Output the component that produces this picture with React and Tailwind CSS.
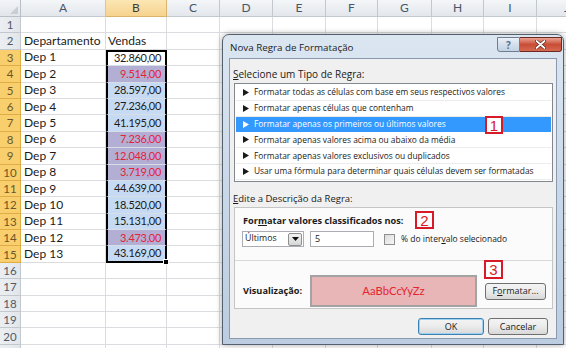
import React from 'react';

const COLS = [
  { key: 'A', cls: 'w-[85px]' },
  { key: 'B', cls: 'w-[61px]' },
  { key: 'C', cls: 'w-[53px]' },
  { key: 'D', cls: 'w-[53px]' },
  { key: 'E', cls: 'w-[53px]' },
  { key: 'F', cls: 'w-[52px]' },
  { key: 'G', cls: 'w-[54px]' },
  { key: 'H', cls: 'w-[52px]' },
  { key: 'I', cls: 'w-[53px]' },
  { key: 'J', cls: 'w-[60px]' },
];

// fill: white | sel (selected, no rule) | low (matched by the rule)
const ROWS = [
  { n: 1 },
  { n: 2, a: 'Departamento', b: 'Vendas', title: true },
  { n: 3, a: 'Dep 1', b: '32.860,00', fill: 'white' },
  { n: 4, a: 'Dep 2', b: '9.514,00', fill: 'low' },
  { n: 5, a: 'Dep 3', b: '28.597,00', fill: 'sel' },
  { n: 6, a: 'Dep 4', b: '27.236,00', fill: 'sel' },
  { n: 7, a: 'Dep 5', b: '41.195,00', fill: 'sel' },
  { n: 8, a: 'Dep 6', b: '7.236,00', fill: 'low' },
  { n: 9, a: 'Dep 7', b: '12.048,00', fill: 'low' },
  { n: 10, a: 'Dep 8', b: '3.719,00', fill: 'low' },
  { n: 11, a: 'Dep 9', b: '44.639,00', fill: 'sel' },
  { n: 12, a: 'Dep 10', b: '18.520,00', fill: 'sel' },
  { n: 13, a: 'Dep 11', b: '15.131,00', fill: 'sel' },
  { n: 14, a: 'Dep 12', b: '3.473,00', fill: 'low' },
  { n: 15, a: 'Dep 13', b: '43.169,00', fill: 'sel' },
  { n: 16 }, { n: 17 }, { n: 18 }, { n: 19 }, { n: 20 }, { n: 21 },
];

const FILL = {
  white: 'bg-white text-[#1b1b1b]',
  sel: 'bg-[#c6dbf3] text-[#1b1b1b]',
  low: 'bg-[#b3afd4] text-[#e2243a]',
};

const RULES = [
  'Formatar todas as células com base em seus respectivos valores',
  'Formatar apenas células que contenham',
  'Formatar apenas os primeiros ou últimos valores',
  'Formatar apenas valores acima ou abaixo da média',
  'Formatar apenas valores exclusivos ou duplicados',
  'Usar uma fórmula para determinar quais células devem ser formatadas',
];

function Badge({ children, className }) {
  return (
    <div
      className={
        'absolute flex items-center justify-center border-2 border-[#d71a28] bg-white text-[15px] leading-none text-[#d71a28] font-["Liberation_Sans",sans-serif] ' +
        className
      }
    >
      {children}
    </div>
  );
}

function Arrow({ color = '#1a1a1a' }) {
  return (
    <svg width="6" height="7" viewBox="0 0 6 7" className="shrink-0">
      <polygon points="0,0 6,3.5 0,7" fill={color} />
    </svg>
  );
}

function WinButton({ children, primary, className }) {
  return (
    <div
      className={
        'flex h-[17px] items-center justify-center rounded-[3px] border bg-gradient-to-b from-[#f4f4f4] via-[#ebebeb] to-[#d8d8d8] text-[9px] text-[#1a1a1a] ' +
        (primary ? 'border-[#3c7fb1] shadow-[inset_0_0_0_1px_#9fd2f2] ' : 'border-[#707070] ') +
        className
      }
    >
      {children}
    </div>
  );
}

function Sheet() {
  return (
    <div className="flex flex-col font-['Lato',sans-serif] text-[12px] text-[#1b1b1b]">
      <div className="flex h-[17px] shrink-0">
        <div className="relative w-[21px] shrink-0 border-r border-b border-[#b9bfc7] bg-gradient-to-b from-[#f2f4f7] to-[#e2e6eb]">
          <svg width="8" height="8" viewBox="0 0 8 8" className="absolute right-[2px] bottom-[2px]">
            <polygon points="8,0 8,8 0,8" fill="#c9ced5" />
          </svg>
        </div>
        {COLS.map(c => (
          <div
            key={c.key}
            className={
              c.cls +
              ' flex shrink-0 items-center justify-center border-r border-b text-[12px] ' +
              (c.key === 'B'
                ? 'border-[#d9b46a] bg-gradient-to-b from-[#fbe6b2] to-[#f6d38f] text-[#3c3c3c]'
                : 'border-[#c3c8cf] bg-gradient-to-b from-[#f4f6f8] to-[#e3e7ec] text-[#4a5566]')
            }
          >
            {c.key}
          </div>
        ))}
      </div>
      {ROWS.map(r => {
        const active = r.n >= 3 && r.n <= 15;
        return (
          <div key={r.n} className="flex h-[16.4px] shrink-0">
            <div
              className={
                'flex w-[21px] shrink-0 items-center justify-center border-r border-b text-[11.5px] ' +
                (active
                  ? 'border-[#e0ac45] bg-[#f8cf6c] text-[#6a5629]'
                  : 'border-[#c3c8cf] bg-gradient-to-r from-[#eceff2] to-[#e2e6ea] text-[#4f5a69]')
              }
            >
              {r.n}
            </div>
            {COLS.map(c => {
              if (c.key === 'A') {
                return (
                  <div key="A" className={c.cls + ' flex shrink-0 items-center overflow-visible whitespace-nowrap border-r border-b border-[#dadcdf] pl-[3px]'}>
                    {r.a}
                  </div>
                );
              }
              if (c.key === 'B') {
                if (active) {
                  return (
                    <div
                      key="B"
                      className={
                        c.cls +
                        ' relative flex shrink-0 items-center justify-end whitespace-nowrap border-x-2 border-b border-x-black border-b-[#d8dee6] pr-[4px] text-[11px] tracking-[-0.3px] ' +
                        FILL[r.fill] +
                        (r.n === 3 ? ' border-t-2 border-t-black' : '') +
                        (r.n === 15 ? ' border-b-2 border-b-black' : '')
                      }
                    >
                      {r.b}
                      {r.n === 15 && (
                        <div className="absolute right-[-4px] bottom-[-4px] h-[6px] w-[6px] border border-white bg-black" />
                      )}
                    </div>
                  );
                }
                return (
                  <div key="B" className={c.cls + ' flex shrink-0 items-center whitespace-nowrap border-r border-b border-[#dadcdf] pl-[2px]'}>
                    {r.b}
                  </div>
                );
              }
              return <div key={c.key} className={c.cls + ' shrink-0 border-r border-b border-[#dadcdf]'} />;
            })}
          </div>
        );
      })}
    </div>
  );
}

function Dialog() {
  return (
    <div className="absolute left-[222px] top-[34px] flex h-[311px] w-[342px] flex-col rounded-t-[7px] border border-[#55606e] bg-gradient-to-b from-[#dbe6f1] via-[#c9d8e9] to-[#bccde1] shadow-[0_0_6px_rgba(0,0,0,0.35)] font-['Open_Sans',sans-serif] text-[#1a1a1a]">
      {/* title bar */}
      <div className="flex h-[23px] shrink-0 items-start">
        <div className="pl-[7px] pt-[7px] text-[9.8px] leading-[12px] text-[#1d1d1d]">Nova Regra de Formatação</div>
        <div className="ml-auto mr-[1px] mt-[2px] flex h-[15px]">
          <div className="flex w-[23px] items-center justify-center rounded-bl-[3px] border border-[#6f7d8e] bg-gradient-to-b from-[#e9f0f7] via-[#d3dfec] to-[#c2d2e4] text-[10px] font-bold leading-none text-[#5b6f88]">
            ?
          </div>
          <div className="flex w-[42px] items-center justify-center rounded-br-[3px] border border-l-0 border-[#6b2a22] bg-gradient-to-b from-[#e8a292] via-[#c94c36] to-[#d66a52]">
            <svg width="11" height="9" viewBox="0 0 11 9">
              <path d="M1.5 1 L9.5 8 M9.5 1 L1.5 8" stroke="#4a1a12" strokeWidth="3" strokeLinecap="round" />
              <path d="M1.5 1 L9.5 8 M9.5 1 L1.5 8" stroke="#ffffff" strokeWidth="1.8" strokeLinecap="round" />
            </svg>
          </div>
        </div>
      </div>

      {/* client area */}
      <div className="relative mx-[6px] mb-[5px] flex flex-1 flex-col border border-[#8a99ad] bg-[#f0f0f0] px-[3px]">
        <div className="mt-[9px] h-[12px] text-[10px] leading-[12px]">
          <span className="underline">S</span>elecione um Tipo de Regra:
        </div>
        <div className="ml-[1px] mt-[3px] flex h-[99px] flex-col border border-[#828790] bg-white p-px">
          {RULES.map((t, i) => (
            <div
              key={t}
              className={
                'flex h-[16px] items-center gap-[5px] whitespace-nowrap pl-[7px] text-[8.4px] leading-none ' +
                (i === 2 ? 'bg-[#3399ff] text-white' : 'border-b border-[#ececec] text-[#1a1a1a]')
              }
            >
              <Arrow color={i === 2 ? '#ffffff' : '#1a1a1a'} />
              {t}
            </div>
          ))}
        </div>

        <div className="mt-[11px] h-[12px] text-[9.5px] leading-[12px]">
          <span className="underline">E</span>dite a Descrição da Regra:
        </div>
        <div className="ml-[1px] mt-[2px] flex h-[102px] flex-col border border-[#c5c5c5] bg-[#fbfbfb]">
          <div className="ml-[8px] mt-[7px] h-[12px] text-[9.2px] font-bold leading-[12px]">
            For<span className="underline">m</span>atar valores classificados nos:
          </div>
          <div className="ml-[7px] mt-[4px] flex h-[16px] items-center">
            <div className="flex h-[16px] w-[62px] items-center border border-[#abadb3] bg-white pl-[2px] pr-px text-[8.8px]">
              <span>Últimos</span>
              <div className="ml-auto flex h-[13px] w-[14px] items-center justify-center rounded-[2px] border border-[#8e8f8f] bg-gradient-to-b from-[#f2f2f2] to-[#d6d6d6]">
                <svg width="7" height="4" viewBox="0 0 7 4">
                  <polygon points="0,0 7,0 3.5,4" fill="#111" />
                </svg>
              </div>
            </div>
            <div className="ml-[6px] flex h-[16px] w-[64px] items-center border border-[#abadb3] bg-white pl-[4px] text-[9px]">5</div>
            <div className="ml-[10px] h-[11px] w-[11px] border border-[#8f8f8f] bg-gradient-to-br from-[#dcdcdc] to-[#f6f6f6]" />
            <div className="ml-[6px] text-[8.5px]">
              % do inter<span className="underline">v</span>alo selecionado
            </div>
          </div>
          <div className="mt-[13px] h-px bg-[#d9d9d9]" />
          <div className="mt-[14px] flex items-center">
            <div className="ml-[8px] w-[67px] text-[9.2px] font-bold">Visualização:</div>
            <div className="flex h-[32px] w-[167px] items-center justify-center border-2 border-[#a3a3a3] bg-[#e8b6b7] font-['Lato',sans-serif] text-[11.3px] text-[#e3262f]">
              AaBbCcYyZz
            </div>
            <WinButton className="ml-[8px] w-[61px]">
              F<span className="underline">o</span>rmatar...
            </WinButton>
          </div>
        </div>

        <div className="mt-[9px] flex justify-end pr-[5px]">
          <WinButton primary className="w-[66px]">OK</WinButton>
          <WinButton className="ml-[4px] w-[60px]">Cancelar</WinButton>
        </div>
      </div>
    </div>
  );
}

export default function App() {
  return (
    <div className="relative h-[348px] w-[566px] overflow-hidden bg-white">
      <Sheet />
      <Dialog />
      <Badge className="left-[485px] top-[116px] h-[18px] w-[18px]">1</Badge>
      <Badge className="left-[415px] top-[211px] h-[18px] w-[19px]">2</Badge>
      <Badge className="left-[484px] top-[260px] h-[19px] w-[19px]">3</Badge>
    </div>
  );
}
